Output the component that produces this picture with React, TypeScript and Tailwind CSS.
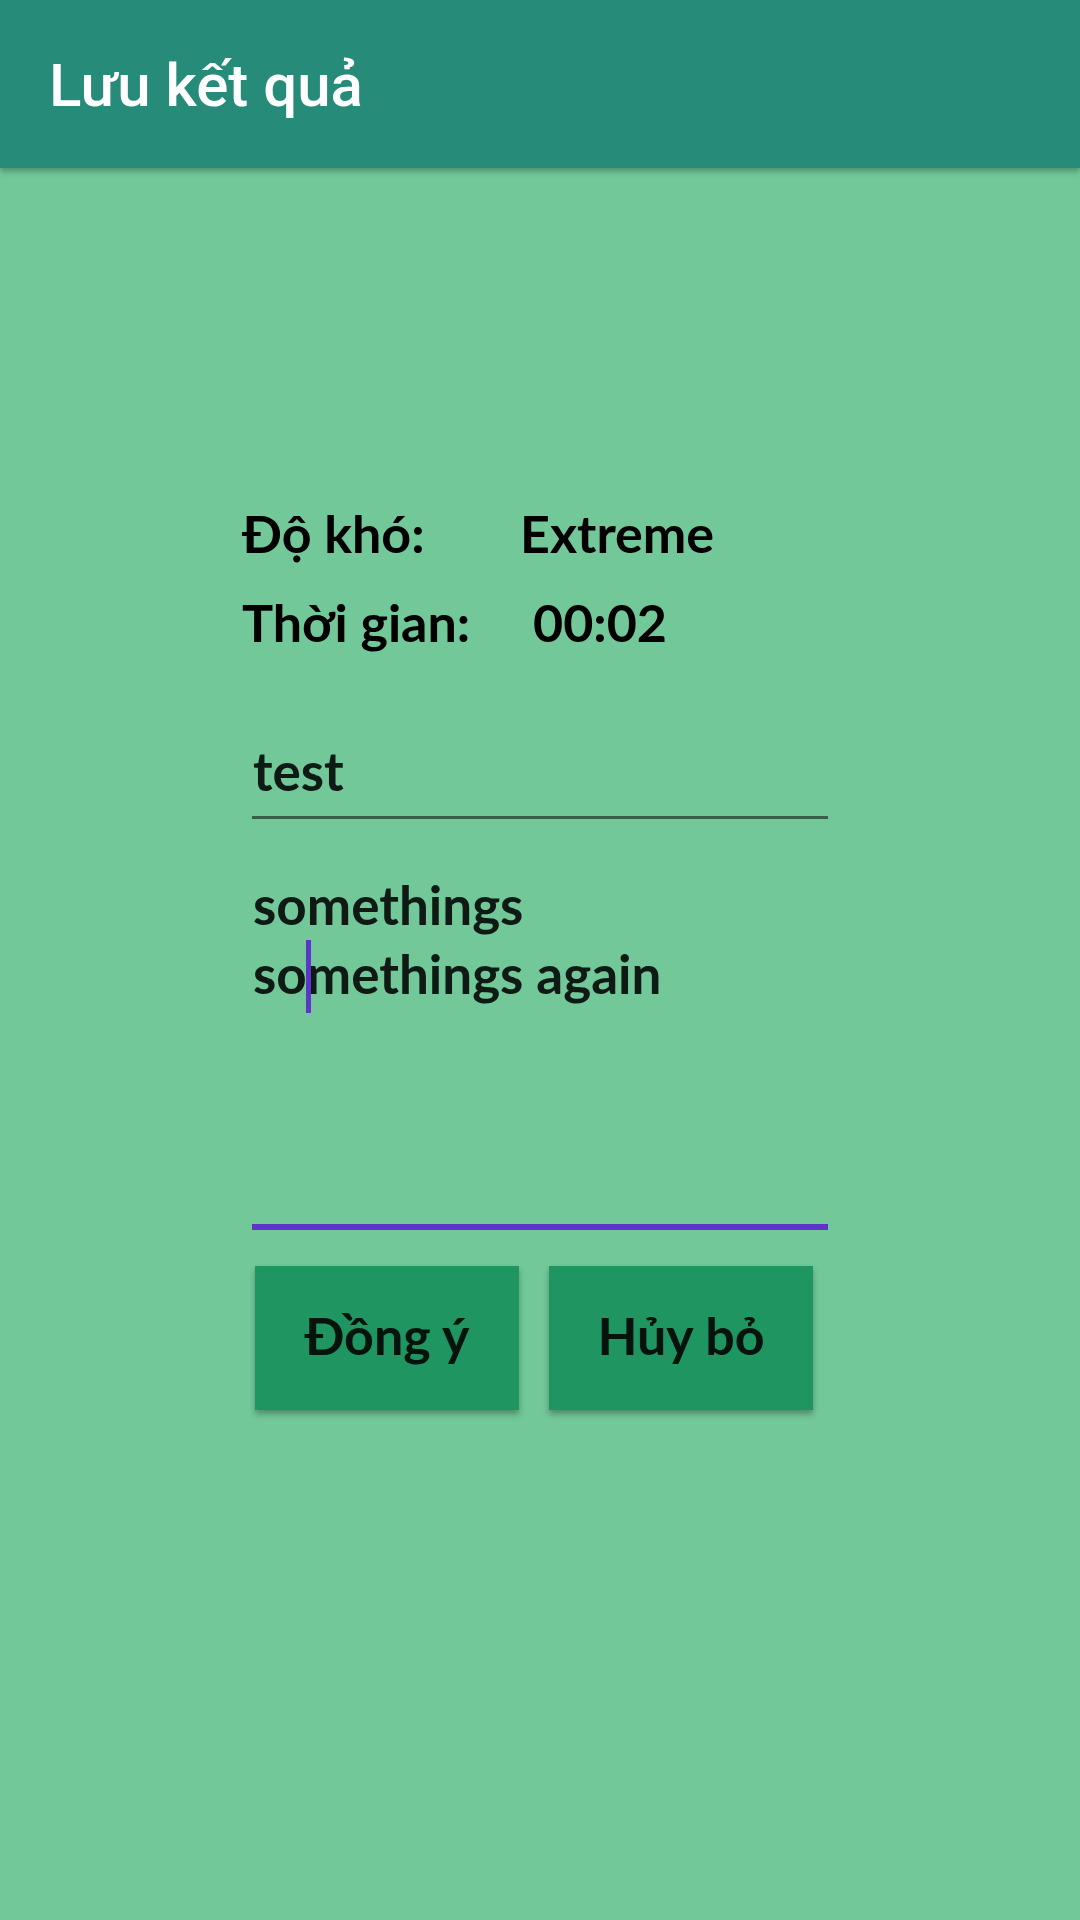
import React from "react";

const LABEL_FONT = "font-['Lato','Noto_Sans',sans-serif]";

const InfoRow = ({ label, value, offset }: { label: string; value: string; offset: string }) => (
  <div className="flex h-[89px] items-center leading-[89px]">
    <span className={`${offset} shrink-0 text-black`}>{label}</span>
    <span className="text-black">{value}</span>
  </div>
);

const ActionButton = ({ children }: { children: React.ReactNode }) => (
  <button className="flex h-[144px] w-[264px] items-center justify-center bg-[#1F9661] pb-[6px] text-[52px] font-bold leading-[62px] text-[#04140D] shadow-[0_4px_6px_rgba(0,0,0,0.3)]">
    {children}
  </button>
);

const App: React.FC = () => {
  return (
    <div className="flex min-h-[1920px] w-[1080px] flex-col bg-[#72C899]">
      {/* toolbar */}
      <header className="relative z-10 flex h-[168px] shrink-0 items-center bg-[#268B79] pl-[49px] pt-[4px] shadow-[0_3px_6px_rgba(0,0,0,0.3)]">
        <h1 className="font-['Roboto',sans-serif] text-[60px] font-medium leading-[60px] text-white">
          Lưu kết quả
        </h1>
      </header>

      <main className={`flex flex-col pl-[242px] ${LABEL_FONT} font-bold`}>
        <div className="mt-[321px] text-[52px]">
          <InfoRow label="Độ khó:" value="Extreme" offset="w-[278px]" />
          <InfoRow label="Thời gian:" value="00:02" offset="w-[291px]" />
        </div>

        <div className="ml-[10px] mt-[69px] flex w-[576px] flex-col text-[53px] text-[#0F1A14]">
          <div className="h-[83px] border-b-[3px] border-[#37604B] pl-[1px] leading-[70px]">test</div>

          <div className="mt-[51px] h-[360px] border-b-[6px] border-[#5B36C8] pl-[1px] leading-[69px]">
            <div>somethings</div>
            <div>
              so
              <span className="relative">
                <span className="absolute left-[-1px] top-[-2px] h-[73px] w-[5px] bg-[#5B36C8]" />
              </span>
              methings again
            </div>
          </div>
        </div>

        <div className="ml-[13px] mt-[36px] flex gap-[30px]">
          <ActionButton>Đồng ý</ActionButton>
          <ActionButton>Hủy bỏ</ActionButton>
        </div>
      </main>
    </div>
  );
};

export default App;
